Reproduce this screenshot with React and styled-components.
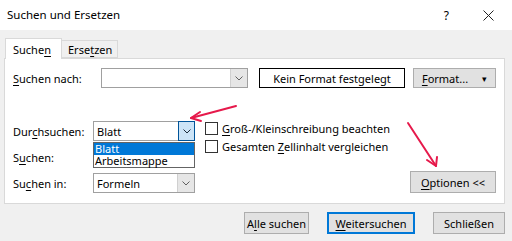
import styled, { createGlobalStyle } from "styled-components";

const GlobalStyle = createGlobalStyle`
  html, body { margin: 0; padding: 0; }
  body {
    font-family: "Noto Sans", "Open Sans", sans-serif;
    font-size: 11px;
    color: #000;
    background: #f0f0f0;
  }
  u { text-decoration-thickness: 1px; text-underline-offset: 2px; }
`;

const Chevron = ({ color = "#606060" }) => (
    <svg width="8" height="5" viewBox="0 0 8 5">
        <path d="M0.5 0.5 L4 4 L7.5 0.5" fill="none" stroke={color} strokeWidth="1" />
    </svg>
);

const App = () => {
    return (
        <Window>
            <GlobalStyle />
            <TitleBar>
                <Title>Suchen und Ersetzen</Title>
                <TitleIcons>
                    <Help>?</Help>
                    <svg width="11" height="11" viewBox="0 0 11 11">
                        <path d="M0.5 0.5 L10.5 10.5 M10.5 0.5 L0.5 10.5" stroke="#222" strokeWidth="1" />
                    </svg>
                </TitleIcons>
            </TitleBar>
            <Body>
                <Tabs>
                    <Tab $active>Suche<u>n</u></Tab>
                    <Tab>Erse<u>t</u>zen</Tab>
                </Tabs>
                <Panel>
                    <TopRow>
                        <Label $width={88}><u>S</u>uchen nach:</Label>
                        <Combo $width={147}>
                            <ComboText></ComboText>
                            <DropBtn><Chevron /></DropBtn>
                        </Combo>
                        <FormatBox>Kein Format festgelegt</FormatBox>
                        <FormatBtn>
                            <span><u>F</u>ormat...</span>
                            <Caret>▾</Caret>
                        </FormatBtn>
                    </TopRow>
                    <Options>
                        <Fields>
                            <Label>Dur<u>c</u>hsuchen:</Label>
                            <SelectWrap>
                                <Combo $width={102}>
                                    <ComboText>Blatt</ComboText>
                                    <DropBtn $focused><Chevron color="#1b2b3a" /></DropBtn>
                                </Combo>
                                <List>
                                    <ListItem $selected>Blatt</ListItem>
                                    <ListItem>Arbeitsmappe</ListItem>
                                </List>
                            </SelectWrap>
                            <Label>S<u>u</u>chen:</Label>
                            <Combo $width={102}>
                                <ComboText></ComboText>
                                <DropBtn><Chevron /></DropBtn>
                            </Combo>
                            <Label>Su<u>c</u>hen in:</Label>
                            <Combo $width={102}>
                                <ComboText>Formeln</ComboText>
                                <DropBtn><Chevron /></DropBtn>
                            </Combo>
                        </Fields>
                        <Checks>
                            <CheckRow><Box /><span><u>G</u>roß-/Kleinschreibung beachten</span></CheckRow>
                            <CheckRow><Box /><span>Gesamten <u>Z</u>ellinhalt vergleichen</span></CheckRow>
                        </Checks>
                        <OptionsBtn><span><u>O</u>ptionen &lt;&lt;</span></OptionsBtn>
                    </Options>
                </Panel>
                <Footer>
                    <Button $width={65}><span>A<u>l</u>le suchen</span></Button>
                    <Button $width={88} $primary><span><u>W</u>eitersuchen</span></Button>
                    <Button $width={72}><span>Schließen</span></Button>
                </Footer>
            </Body>
            <Arrows width="512" height="241" viewBox="0 0 512 241">
                <g stroke="#e6194b" strokeWidth="2" fill="none" strokeLinecap="round">
                    <path d="M236 106 L191 118" />
                    <path d="M191 118 L200 112 M191 118 L201 121" />
                    <path d="M408 123 L436 166" />
                    <path d="M436 166 L427 160 M436 166 L437 157" />
                </g>
            </Arrows>
        </Window>
    )
}

const Window = styled.div`
position: relative;
width: 512px;
height: 241px;
overflow: hidden;
display: flex;
flex-direction: column;
background: #f0f0f0;
`
const TitleBar = styled.div`
height: 30px;
flex: none;
background: #fff;
display: flex;
align-items: center;
justify-content: space-between;
padding: 0 18px 0 7px;
`
const Title = styled.div`
font-size: 11.5px;
margin-top: -2px;
`
const TitleIcons = styled.div`
display: flex;
align-items: center;
gap: 34px;
`
const Help = styled.span`
font-size: 12px;
`
const Body = styled.div`
flex: 1;
padding: 8px 7px 0 4px;
display: flex;
flex-direction: column;
`
const Tabs = styled.div`
display: flex;
align-items: flex-end;
height: 20px;
padding-left: 1px;
`
const Tab = styled.div`
box-sizing: border-box;
height: ${p => p.$active ? "21px" : "18px"};
margin-bottom: ${p => p.$active ? "-1px" : "0"};
padding: 0 ${p => p.$active ? "7px" : "6px"};
display: flex;
align-items: center;
border: 1px solid #d9d9d9;
border-bottom: ${p => p.$active ? "none" : "1px solid #d9d9d9"};
border-left: ${p => p.$active ? "1px solid #d9d9d9" : "none"};
background: ${p => p.$active ? "#fff" : "#f0f0f0"};
position: relative;
z-index: 1;
width: ${p => p.$active ? "57px" : "56px"};
`
const Panel = styled.div`
box-sizing: border-box;
height: 146px;
border: 1px solid #d9d9d9;
background: #fff;
padding: 9px 8px 10px 8px;
display: flex;
flex-direction: column;
`
const TopRow = styled.div`
display: flex;
align-items: center;
height: 20px;
`
const Label = styled.div`
width: ${p => p.$width ? p.$width + "px" : "auto"};
flex: none;
white-space: nowrap;
`
const Combo = styled.div`
box-sizing: border-box;
width: ${p => p.$width}px;
height: 20px;
border: 1px solid #a0a0a0;
background: #fff;
display: flex;
align-items: stretch;
`
const ComboText = styled.div`
flex: 1;
padding-left: 3px;
display: flex;
align-items: center;
`
const DropBtn = styled.div`
box-sizing: border-box;
width: 17px;
display: flex;
align-items: center;
justify-content: center;
background: ${p => p.$focused ? "#cce4f7" : "#e6e6e6"};
border: ${p => p.$focused ? "1px solid #005499" : "none"};
margin: ${p => p.$focused ? "-1px -1px -1px 0" : "0"};
border-left: 1px solid ${p => p.$focused ? "#005499" : "#d0d0d0"};
`
const FormatBox = styled.div`
box-sizing: border-box;
width: 146px;
height: 20px;
margin-left: 11px;
border: 1px solid #000;
display: flex;
align-items: center;
justify-content: center;
`
const Button = styled.div`
box-sizing: border-box;
width: ${p => p.$width}px;
height: 22px;
background: #e1e1e1;
border: ${p => p.$primary ? "2px solid #0078d7" : "1px solid #adadad"};
display: flex;
align-items: center;
justify-content: center;
white-space: nowrap;
`
const FormatBtn = styled(Button)`
width: 83px;
height: 20px;
margin-left: auto;
gap: 14px;
`
const Caret = styled.span`
font-size: 9px;
`
const Options = styled.div`
margin-top: 33px;
flex: 1;
display: flex;
align-items: flex-start;
`
const Fields = styled.div`
display: grid;
grid-template-columns: 80px 102px;
grid-auto-rows: 20px;
row-gap: 6px;
align-items: center;
`
const SelectWrap = styled.div`
position: relative;
z-index: 2;
`
const List = styled.div`
position: absolute;
top: 21px;
left: 0;
box-sizing: border-box;
width: 102px;
border: 1px solid #646464;
background: #fff;
`
const ListItem = styled.div`
height: 12px;
line-height: 12px;
padding-left: 1px;
background: ${p => p.$selected ? "#0078d7" : "#fff"};
color: ${p => p.$selected ? "#fff" : "#000"};
`
const Checks = styled.div`
margin-left: 10px;
margin-top: 1px;
display: flex;
flex-direction: column;
gap: 5px;
`
const CheckRow = styled.div`
display: flex;
align-items: center;
gap: 4px;
height: 13px;
white-space: nowrap;
`
const Box = styled.div`
box-sizing: border-box;
width: 13px;
height: 13px;
border: 1px solid #333;
background: #fff;
`
const OptionsBtn = styled(Button)`
margin-left: auto;
align-self: flex-end;
width: 86px;
`
const Footer = styled.div`
display: flex;
justify-content: flex-end;
gap: 18px;
margin-top: 8px;
`
const Arrows = styled.svg`
position: absolute;
left: 0;
top: 0;
pointer-events: none;
z-index: 5;
`
export default App;
